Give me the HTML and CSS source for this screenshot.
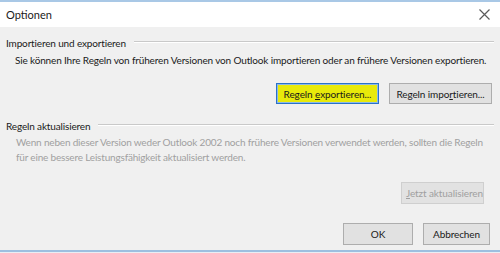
FILE: index.html
```html
<!DOCTYPE html>
<html lang="de">
<head>
    <meta charset="UTF-8">
    <title>Optionen</title>
    <link rel="stylesheet" href="styles.css">
</head>
<body>
<div class="dialog">
    <div class="titlebar">
        <span class="title">Optionen</span>
        <svg class="close" width="11" height="11" viewBox="0 0 11 11">
            <path d="M0.5 0.5 L10.5 10.5 M10.5 0.5 L0.5 10.5" stroke="#5a5a5a" stroke-width="1.2" fill="none"/>
        </svg>
    </div>
    <div class="content">
        <div class="group-head">
            <span>Importieren und exportieren</span>
            <span class="rule"></span>
        </div>
        <p class="desc">Sie können Ihre Regeln von früheren Versionen von Outlook importieren oder an frühere Versionen exportieren.</p>
        <div class="row row-io">
            <button class="btn btn-focus">Regeln <u>e</u>xportieren...</button>
            <button class="btn btn-import">Regeln impo<u>r</u>tieren...</button>
        </div>
        <div class="group-head group-two">
            <span>Regeln aktualisieren</span>
            <span class="rule"></span>
        </div>
        <p class="desc desc-off">Wenn neben dieser Version weder Outlook 2002 noch frühere Versionen verwendet werden, sollten die Regeln<br>für eine bessere Leistungsfähigkeit aktualisiert werden.</p>
        <div class="row row-update">
            <button class="btn btn-off"><u>J</u>etzt aktualisieren</button>
        </div>
        <div class="row row-footer">
            <button class="btn btn-ok">OK</button>
            <button class="btn btn-cancel">Abbrechen</button>
        </div>
    </div>
    <div class="bottomline"></div>
</div>
</body>
</html>
```

FILE: styles.css
```css
* {
    margin: 0;
    padding: 0;
    box-sizing: border-box;
}

html, body {
    width: 500px;
    height: 253px;
    overflow: hidden;
}

body {
    background: #f0f0f0;
    font-family: Lato, "Noto Sans", sans-serif;
    font-size: 10px;
    letter-spacing: -0.15px;
    color: #1a1a1a;
}

.dialog {
    height: 253px;
    display: flex;
    flex-direction: column;
    border-top: 2px solid #a9c8e6;
}

.titlebar {
    height: 25px;
    background: #ffffff;
    display: flex;
    align-items: center;
    justify-content: space-between;
    padding: 0 10px 0 6px;
}

.title {
    font-size: 11px;
    letter-spacing: 0;
    color: #1a1a1a;
}

.content {
    flex: 1;
    padding: 8px 6px 0 6px;
}

.group-head {
    display: flex;
    align-items: center;
    height: 16px;
    line-height: 16px;
    white-space: nowrap;
}

.rule {
    flex: 1;
    height: 2px;
    border-top: 1px solid #c9c9c9;
    border-bottom: 1px solid #ffffff;
    margin-left: 8px;
    margin-top: -2px;
}

.group-two {
    margin-top: 14px;
}

.desc {
    padding-left: 9px;
    line-height: 16px;
    margin-top: 1px;
    white-space: nowrap;
}

.desc-off {
    color: #a0a0a0;
    line-height: 15px;
    padding-left: 10px;
    letter-spacing: -0.18px;
}

.row {
    display: flex;
    justify-content: flex-end;
    gap: 10px;
}

.row-io {
    margin-top: 15px;
    padding-right: 2px;
}

.row-update {
    margin-top: 17px;
    padding-right: 10px;
}

.row-footer {
    margin-top: 19px;
    padding-right: 4px;
}

.btn {
    font-family: inherit;
    font-size: 10px;
    letter-spacing: -0.1px;
    height: 21px;
    padding: 0 4px;
    background: #e1e1e1;
    border: 1px solid #adadad;
    color: #1a1a1a;
    white-space: nowrap;
}

.btn u {
    text-underline-offset: 1px;
}

.btn-focus {
    width: 103px;
    background: #e8ea0a;
    border: 1px solid #2a72c9;
    box-shadow: inset 0 0 0 1px #8db9e6;
}

.btn-import {
    width: 103px;
}

.btn-off {
    width: 83px;
    height: 22px;
    background: #e2e2e2;
    border-color: #cfcfcf;
    color: #a0a0a0;
}

.btn-ok {
    width: 70px;
    height: 22px;
}

.btn-cancel {
    width: 67px;
    height: 22px;
}

.bottomline {
    height: 3px;
    border-top: 2px solid #9dbfe0;
    background: #e9eef4;
}
```
